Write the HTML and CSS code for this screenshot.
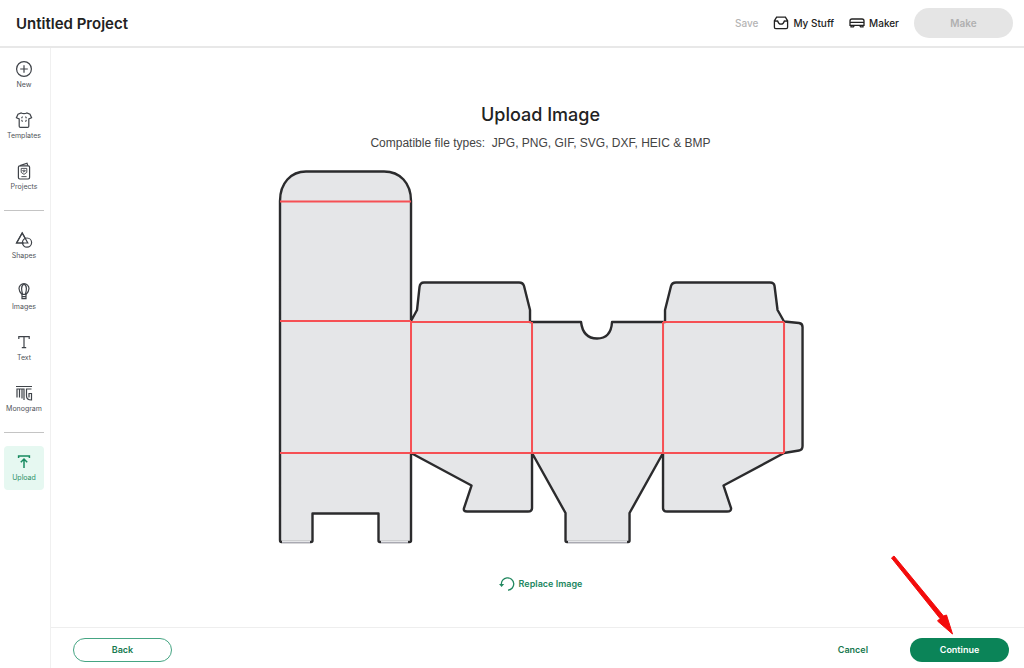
FILE: index.html
```html
<!DOCTYPE html>
<html lang="en">
<head>
<meta charset="utf-8">
<meta name="viewport" content="width=device-width, initial-scale=1">
<title>Untitled Project</title>
<link rel="stylesheet" href="styles.css">
</head>
<body>
<header class="topbar">
  <h1 class="project-title">Untitled Project</h1>
  <div class="topbar-actions">
    <button class="link-btn save" type="button" disabled>Save</button>
    <button class="link-btn" type="button">
      <svg class="icon-sm" viewBox="0 0 16 14"><path d="M3.6 1.200h8.800l2.200 3.600v6.400q0 1.400-1.400 1.400H2.800q-1.400 0-1.400-1.400V4.800zM1.600 5.200 4.600 5Q5.600 8.200 8 8.200T11.400 5l3 .2"/></svg>
      My Stuff
    </button>
    <button class="link-btn" type="button">
      <svg class="icon-sm" viewBox="0 0 16 14"><path d="M3 3h10q2 0 2 2v4.400H1V5Q1 3 3 3zM1.400 6.400h13.200M2 9.400v1.400h2.400l.8-1.200M14 9.400v1.400h-2.400l-.8-1.200"/></svg>
      Maker
    </button>
    <button class="pill make" type="button" disabled>Make</button>
  </div>
</header>
<div class="workspace">
  <nav class="sidebar">
    <button class="tool" type="button"><svg class="icon" viewBox="0 0 18 18"><circle cx="9" cy="9" r="7.4"/><path d="M9 5.200v7.600M5.200 9h7.600"/></svg>New</button>
    <button class="tool" type="button"><svg class="icon" viewBox="0 0 18 18"><path d="M6.200 2Q9 3.400 11.800 2L15 3.200 16.600 6.800 13.800 8V15.200Q13.800 16.400 12.600 16.400H5.400Q4.200 16.400 4.200 15.200V8L1.400 6.800 3 3.200z"/><path class="thin" d="M6.800 7.400V6H8M10 6h1.200v1.400M6.800 8.800v1.400H8M10 10.200h1.200V8.800"/></svg>Templates</button>
    <button class="tool" type="button"><svg class="icon" viewBox="0 0 18 18"><rect x="3.400" y="3.800" width="11.200" height="13.200" rx="1.400"/><path d="M5 3.600 12 1.200 12.800 3.600"/><path class="thin" d="M6.200 6.400h5.600v4L9 12.400 6.200 10.400zM9 10.200 7.600 8.800Q7.800 7.600 9 8.400 10.200 7.600 10.400 8.800zM6.400 14.600h5.200"/></svg>Projects</button>
    <hr class="divider">
    <button class="tool" type="button"><svg class="icon" viewBox="0 0 18 18"><path d="M9 12H1.600L7.200 2l3.200 5.600"/><path d="M7.200 2 12.800 12H1.600z"/><circle cx="12" cy="11.600" r="4.600"/></svg>Shapes</button>
    <button class="tool" type="button"><svg class="icon" viewBox="0 0 18 18"><path d="M6.800 12.400C5 10.400 4 9 4 6.600a5 5 0 0 1 10 0C14 9 13 10.400 11.200 12.400zM7.600 12.200Q6.600 9 6.600 6.400T9 1.800Q11.400 3.800 11.400 6.400T10.400 12.200M7 13v3.600h4V13M7 14.600h4"/></svg>Images</button>
    <button class="tool" type="button"><svg class="icon" viewBox="0 0 18 18"><path d="M3.800 6V3.600h10.400V6M9 3.600v11M6.800 14.600h4.400"/></svg>Text</button>
    <button class="tool" type="button"><svg class="icon" viewBox="0 0 18 18"><path d="M1 2.500h16M2 13.500V5h7v11M4.500 5v8.500M7 5v9.500M16.500 5h-5v7q0 4 5 4V9.500h-2.500v4"/></svg>Monogram</button>
    <hr class="divider">
    <button class="tool active" type="button" aria-current="page"><svg class="icon" viewBox="0 0 18 18"><path d="M3.600 5V3h10.800v2M9 15V6.200M5.800 9.200 9 6l3.200 3.200"/></svg>Upload</button>
  </nav>
  <div class="panel">
    <main class="content">
      <h2 class="heading">Upload Image</h2>
      <p class="hint">Compatible file types:&nbsp; JPG, PNG, GIF, SVG, DXF, HEIC &amp; BMP</p>
      <svg class="preview" viewBox="277 169 526 374" role="img" aria-label="Box template">
        <path class="cut" d="M280 540V201C280 183 291 171.500 306 171.500H384C400 171.500 411 183 411 201V321L417 310 419.500 287Q420 282.500 424 282.500H519Q523 282.500 524 286L530 310V322H581Q583 338.500 597 338.500T612 322H665V310L671 286Q672 282.500 676 282.500H770Q774 282.500 774.500 286L777.500 310 784 321.500 799 323Q802.500 323.500 802.500 327V446Q802.500 450 799 450.500L784 453 723.500 485.500 731 508Q731.500 511.500 727 511.500H667Q663 511.500 663 508V453L629.500 513V540.500Q629.500 542 628 542H567Q565.500 542 565.500 540.500V513L532 453V508Q532 511.500 528 511.500H467Q463 511.500 464 508L471.500 485.500 411 453V540.500Q411 542 409.500 542H380Q378.500 542 378.500 540.500V513.500H312.500V540.500Q312.500 542 311 542H281.500Q280 542 280 540z"/>
        <path class="mask" d="M282 542h28M381 542h27M568 542h59"/>
        <path class="base" d="M282 542.500h28M381 542.500h27M568 542.500h59"/>
        <path class="fold" d="M280 201.500H411M280 321H411M411 322H531M663 322H784M280 453H784M411 321V453M532 322V453M663 322V453M784 322V453"/>
      </svg>
      <button class="link-btn replace" type="button">
        <svg class="icon-sm" viewBox="0 0 16 14"><path d="M2.400 7.800A6.200 6.200 0 1 1 9 13.200"/><path class="tip" d="M0 7h5.200L2.600 10z"/></svg>
        Replace Image
      </button>
    </main>
    <footer class="actions">
      <button class="pill back" type="button">Back</button>
      <div class="actions-end">
        <button class="link-btn cancel" type="button">Cancel</button>
        <button class="pill continue" type="button">Continue</button>
      </div>
      <svg class="pointer" viewBox="0 0 64 82" aria-hidden="true"><path d="M4 2 1.500 4 50 64.500 47.500 67 62.500 80 56.500 61 53.500 62z"/></svg>
    </footer>
  </div>
</div>
</body>
</html>
```
FILE: styles.css
```css
* { box-sizing: border-box; }
body {
  margin: 0;
  min-height: 100vh;
  display: flex;
  flex-direction: column;
  background: #fff;
  color: #222;
  font-family: Inter, "Liberation Sans", sans-serif;
}
button {
  margin: 0;
  padding: 0;
  border: 0;
  background: none;
  color: inherit;
  font: inherit;
}
svg { fill: none; stroke: currentColor; }
.topbar {
  display: flex;
  align-items: center;
  justify-content: space-between;
  height: 48px;
  padding: 0 11px 0 16px;
  border-bottom: 2px solid #e8e8e8;
}
.project-title { margin: 0; font-size: 15px; font-weight: 600; }
.topbar-actions { display: flex; align-items: center; gap: 15px; }
.link-btn {
  display: flex;
  align-items: center;
  gap: 4px;
  font-size: 10px;
  font-weight: 500;
  line-height: 14px;
}
.save { color: #b4b4b4; }
.icon-sm { width: 16px; height: 14px; stroke-width: 1.3; }
.tip { fill: currentColor; stroke: none; }
.pill {
  width: 99px;
  height: 24px;
  border-radius: 15px;
  font-size: 9px;
  font-weight: 600;
}
.make { height: 30px; background: #e5e5e5; color: #b0b0b0; font-size: 10px; }
.workspace { flex: 1; display: flex; }
.sidebar {
  display: flex;
  flex-direction: column;
  gap: 7px;
  width: 51px;
  padding: 5px 6px 0 4px;
  border-right: 1px solid #f0f0f0;
}
.tool {
  display: flex;
  flex-direction: column;
  align-items: center;
  gap: 2px;
  height: 44px;
  padding-top: 7px;
  border-radius: 4px;
  color: #50545a;
  font-size: 7px;
  line-height: 10px;
}
.icon { width: 18px; height: 18px; flex: none; stroke: #3f4349; stroke-width: 1.2; }
.thin { stroke-width: 0.9; }
.active { background: #e6f8f1; color: #2b9068; }
.active .icon { stroke: #188a60; stroke-width: 1.5; }
.divider { width: 100%; margin: 4px 0 6px; border: 0; border-top: 1px solid #c4c4c4; }
.panel { flex: 1; display: flex; flex-direction: column; }
.content {
  flex: 1;
  display: flex;
  flex-direction: column;
  align-items: center;
  padding: 55px 0 0 6px;
}
.heading { margin: 0; font-size: 18px; font-weight: 500; line-height: 24px; }
.hint {
  margin: 7px 0 17px;
  color: #444;
  font-family: "Liberation Sans", sans-serif;
  font-size: 12px;
  line-height: 18px;
}
.preview { width: 54.4%; overflow: visible; }
.cut { fill: #e5e6e8; stroke: #2b2b2d; stroke-width: 2.4; stroke-linejoin: round; }
.mask { stroke: #e5e6e8; stroke-width: 3; }
.base { stroke: #a9a9b2; stroke-width: 1; }
.fold { stroke: #f65054; stroke-width: 2; }
.replace { margin-top: 34px; color: #21875f; font-size: 9px; font-weight: 600; }
.actions {
  position: relative;
  display: flex;
  align-items: center;
  justify-content: space-between;
  height: 41px;
  padding: 3px 15px 0 22px;
  border-top: 1px solid #eee;
}
.actions-end { display: flex; align-items: center; gap: 42px; }
.back { border: 1px solid #45a583; color: #17794f; }
.cancel { color: #17794f; font-size: 9px; font-weight: 600; }
.continue { background: #0b8458; color: #fff; }
.pointer {
  position: absolute;
  right: 70px;
  bottom: 32px;
  width: 64px;
  height: 82px;
  fill: #f30b0b;
  stroke: #f30b0b;
}
```
